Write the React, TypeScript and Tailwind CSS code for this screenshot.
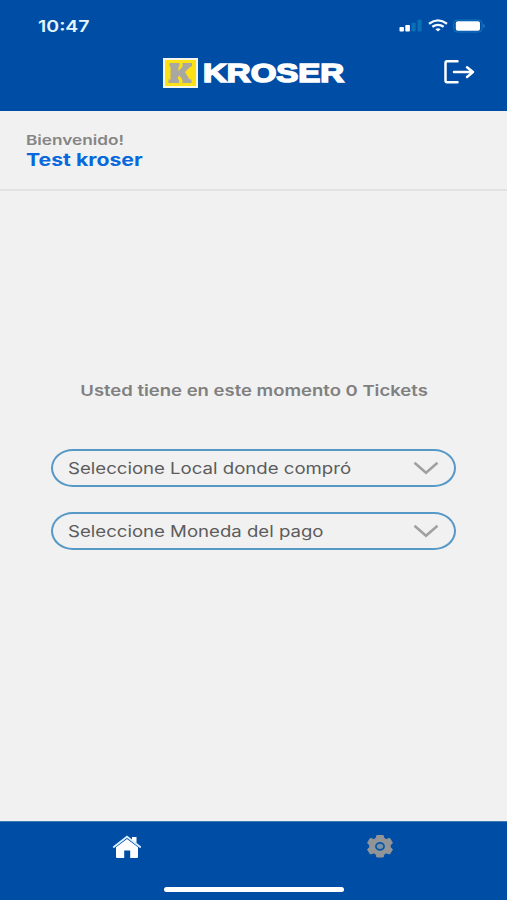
import React from "react";

function StatusBar() {
  return (
    <div className="flex h-[51px] items-center justify-between pl-[38px] pr-[22px]">
      <span className="origin-left scale-x-[1.22] text-[16px] leading-5 font-semibold text-[#e4f5ff]">10:47</span>
      <div className="flex items-center text-white">
        <svg width="23" height="14" viewBox="0 0 23 14">
          <rect x="0.5" y="8" width="4.4" height="4.6" rx="0.8" fill="#fff" />
          <rect x="6.3" y="6" width="4.6" height="6.6" rx="0.8" fill="#fff" />
          <rect x="12.5" y="3.8" width="4.2" height="8.8" rx="0.8" fill="#0a6fb4" />
          <rect x="18.5" y="0.8" width="4.2" height="11.8" rx="0.8" fill="#0a6fb4" />
        </svg>
        <svg className="ml-[6px]" width="20" height="14" viewBox="0 0 20 14" fill="none" stroke="#f0faff" strokeWidth="2.3">
          <path d="M1 4.7Q10 -1.9 19 4.7" />
          <path d="M4.3 7.8Q10 3.9 15.7 7.8" />
          <path d="M7.4 10.2Q10 8.4 12.6 10.2L10 12.4Z" fill="#f0faff" stroke="none" />
        </svg>
        <svg className="ml-[5px]" width="32" height="14" viewBox="0 0 32 14">
          <rect x="0.7" y="1" width="28.4" height="12" rx="3.6" fill="none" stroke="#1478c0" strokeWidth="1" />
          <rect x="2.8" y="2.2" width="24.2" height="9.6" rx="2" fill="#fff" />
          <path d="M30.3 5V9Q31.8 8.4 31.8 7T30.3 5Z" fill="#1c80c4" />
        </svg>
      </div>
    </div>
  );
}

function Brand() {
  return (
    <div className="mt-[2px] flex h-[30px] items-center">
      <svg width="35" height="30" viewBox="0 0 35 30">
        <rect width="35" height="30" fill="#f5f8e8" />
        <rect x="2" y="2" width="31" height="26" fill="#fbe116" />
        <path d="M6.500 5H16.500V8.500H15.500V13L19.500 8.500V5H29V8.500H27.500L22 14L26.500 21.500H28.500V25H19.500V22L16.500 17.500L15 19V21.500H16V25H5.500V21.500H7.500V8.500H6.500Z" fill="#a9a7a2" />
      </svg>
      <span className="ml-[5px] origin-left scale-x-[1.245] font-['Liberation_Sans',Arial,sans-serif] text-[26.500px] leading-[30px] font-bold text-white [-webkit-text-stroke:1.600px_#fff]">KROSER</span>
    </div>
  );
}

function LogoutIcon() {
  return (
    <svg width="32" height="26" viewBox="0 0 32 26" fill="none" stroke="#fff" strokeWidth="2.5" strokeLinejoin="round" strokeLinecap="round">
      <path d="M14.500 2.300H4Q2.500 2.300 2.500 4V21.500Q2.500 23.300 4 23.300H14.500" />
      <path d="M11 13.100H29.800M24 8.300L30 13.100L24 18" />
    </svg>
  );
}

function SelectField({ children }: { children: React.ReactNode }) {
  return (
    <button className="flex h-[38px] w-[405px] items-center justify-between rounded-[22px/19px] border-2 border-[#5698c6] pr-[15px] pl-[15px] text-left">
      {children}
      <svg width="26" height="14" viewBox="0 0 26 14" fill="none" stroke="#a0a0a0" strokeWidth="2.500">
        <path d="M1.500 1.800L13 11.800L24.500 1.800" />
      </svg>
    </button>
  );
}

function TabBar() {
  return (
    <nav className="relative grid h-[79px] shrink-0 grid-cols-2 border-t border-[#3e7cb4] bg-[#004da6]">
      <div className="flex justify-center pt-[12px]">
        <svg width="30" height="26" viewBox="0 0 30 26" fill="#fff">
          <path d="M1.800 13L15 2.800L28.200 13" fill="none" stroke="#d7efff" strokeWidth="1.900" strokeLinecap="round" />
          <path d="M20 3H24.500V9L20 6Z" />
          <path d="M4 13.200L15 5L26 13.200V23Q26 24 25 24H18.200V16.500H12.200V24H5Q4 24 4 23Z" />
        </svg>
      </div>
      <div className="flex justify-center pt-[12px]">
        <svg width="28" height="25" viewBox="0 0 28 25">
          <path d="M10.800 1.500H17.200L18 4.400L20.200 5.500L23.700 4.300L26.500 9L24.200 11.200V13.200L26.500 15.400L23.700 20L20.200 18.900L18 20L17.200 23H10.800L10 20L7.800 18.900L4.300 20L1.500 15.400L3.800 13.200V11.200L1.500 9L4.300 4.300L7.800 5.500L10 4.400Z" fill="#929598" stroke="#929598" strokeLinejoin="round" />
          <ellipse cx="14" cy="12.300" rx="4.100" ry="3.500" fill="#7990a5" stroke="#0754a5" strokeWidth="1.700" />
        </svg>
      </div>
      <div className="absolute bottom-[8px] left-[164px] h-[5px] w-[180px] rounded-full bg-white" />
    </nav>
  );
}

export default function App() {
  return (
    <div className="flex h-[900px] w-[507px] flex-col overflow-hidden bg-[#f1f1f1] font-['Inter',sans-serif] whitespace-nowrap">
      <header className="h-[111px] shrink-0 bg-[#004da6]">
        <StatusBar />
        <div className="flex items-center justify-between pt-[5px] pr-[32px] pl-[163px]">
          <Brand />
          <LogoutIcon />
        </div>
      </header>
      <section className="flex h-[80px] shrink-0 flex-col items-start border-b-2 border-[#e2e2e2] pt-[20px] pl-[26px]">
        <span className="origin-left scale-x-[1.275] text-[13.500px] leading-[18px] font-semibold text-[#858585]">Bienvenido!</span>
        <span className="origin-left scale-x-[1.215] text-[17.500px] leading-[22px] font-bold text-[#0868dc]">Test kroser</span>
      </section>
      <main className="flex flex-1 flex-col items-center pt-[189px]">
        <p className="translate-x-[1px] scale-x-[1.232] text-[15px] leading-[22px] font-semibold text-[#808080]">Usted tiene en este momento 0 Tickets</p>
        <div className="mt-[47px] flex flex-col gap-[25px]">
          <SelectField><span className="origin-left scale-x-[1.2] pt-[2px] text-[15.500px] leading-5 text-[#5c5c5c]">Seleccione Local donde compró</span></SelectField>
          <SelectField><span className="origin-left scale-x-[1.2] pt-[2px] text-[15.500px] leading-5 text-[#5c5c5c]">Seleccione Moneda del pago</span></SelectField>
        </div>
      </main>
      <TabBar />
    </div>
  );
}
